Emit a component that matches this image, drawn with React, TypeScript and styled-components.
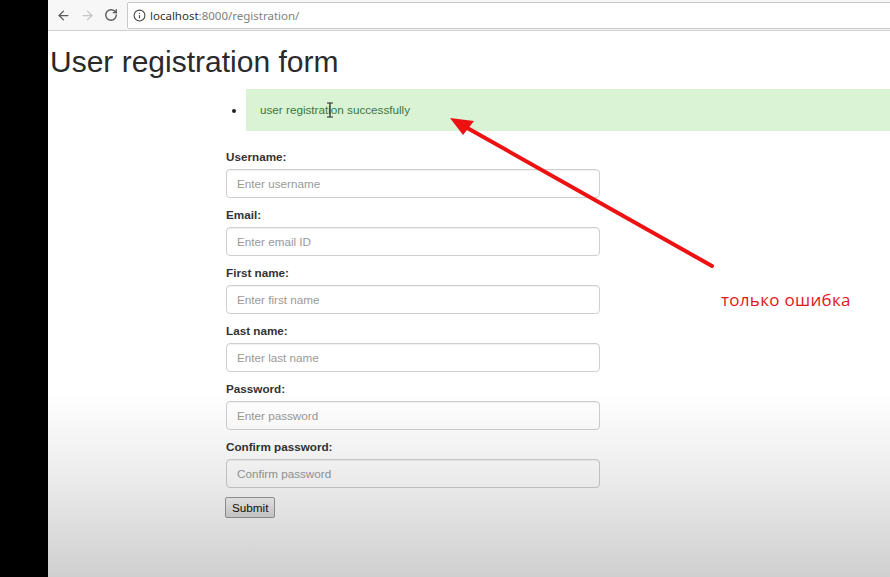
import * as React from "react";
import styled, { createGlobalStyle } from "styled-components";
import { ArrowLeft, ArrowRight, RotateCw, Info } from "lucide-react";

const GlobalStyle = createGlobalStyle`
  html, body {
    margin: 0;
    padding: 0;
    background: #000;
  }
  * {
    box-sizing: border-box;
  }
`;

const SFrame = styled.div`
  display: flex;
  width: 890px;
  height: 577px;
  overflow: hidden;
  background: #000;
`;

const SSide = styled.div`
  width: 48px;
  flex-shrink: 0;
  background: #000;
`;

const SWindow = styled.div`
  position: relative;
  flex: 1;
  display: flex;
  flex-direction: column;
  background: #fff;
  overflow: hidden;
`;

const SToolbar = styled.div`
  height: 31px;
  display: flex;
  align-items: center;
  padding-left: 3px;
  background: #f7f7f7;
  border-bottom: 1px solid #cfcfcf;
  flex-shrink: 0;
`;

const SNav = styled.span<{ $dim?: boolean }>`
  display: flex;
  width: 24px;
  justify-content: center;
  color: ${({ $dim }) => ($dim ? "#c4c4c4" : "#5a5a5a")};
`;

const SUrlBox = styled.div`
  flex: 1;
  height: 27px;
  margin-left: 4px;
  margin-right: -4px;
  display: flex;
  align-items: center;
  gap: 4px;
  padding-left: 5px;
  background: #fff;
  border: 1px solid #c9c9c9;
  border-radius: 2px;
  font-family: "Noto Sans", "DejaVu Sans", sans-serif;
  font-size: 11.5px;
  color: #808080;
`;

const SHost = styled.span`
  color: #303030;
`;

const SPage = styled.div`
  flex: 1;
  padding-left: 2px;
  font-family: "Liberation Sans", Arial, sans-serif;
  color: #333;
`;

const STitle = styled.h1`
  margin: 14px 0 10px;
  font-size: 30px;
  line-height: 34px;
  font-weight: 400;
  color: #2a2a2a;
`;

const SContent = styled.div`
  margin-left: 176px;
`;

const SMessages = styled.ul`
  margin: 0 0 17px;
  padding-left: 20px;
  font-size: 11.7px;
`;

const SMessage = styled.li`
  height: 42px;
  line-height: 42px;
  padding-left: 14px;
  background: #daf3d5;
  color: #3c763d;
  margin-right: -10px;
  &::marker {
    color: #222;
    font-size: 12px;
  }
`;

const SField = styled.div`
  display: flex;
  flex-direction: column;
  margin-bottom: 8px;
`;

const SLabel = styled.label`
  font-size: 11.7px;
  line-height: 18px;
  font-weight: 700;
  margin-bottom: 3px;
  color: #333;
`;

const SInput = styled.input`
  width: 374px;
  height: 29px;
  padding: 0 10px;
  font-family: "Liberation Sans", Arial, sans-serif;
  font-size: 11.7px;
  color: #555;
  background: #fff;
  border: 1px solid #cfcfcf;
  border-radius: 4px;
  box-shadow: inset 0 1px 1px rgba(0, 0, 0, 0.06);
  &::placeholder {
    color: #9a9a9a;
  }
`;

const SSubmit = styled.button`
  margin-top: 1px;
  margin-left: -1px;
  height: 21px;
  padding: 0 6px;
  font-family: "Liberation Sans", Arial, sans-serif;
  font-size: 11.7px;
  color: #111;
  background: linear-gradient(#f6f6f6, #dcdcdc);
  border: 1px solid #9a9a9a;
  border-radius: 2px;
`;

const SShade = styled.div`
  position: absolute;
  inset: 0;
  pointer-events: none;
  background: linear-gradient(
    to bottom,
    rgba(0, 0, 0, 0) 0%,
    rgba(0, 0, 0, 0) 68%,
    rgba(0, 0, 0, 0.07) 82%,
    rgba(0, 0, 0, 0.19) 100%
  );
`;

const SMarks = styled.svg`
  position: absolute;
  left: -48px;
  top: 0;
  pointer-events: none;
`;

const SNote = styled.div`
  position: absolute;
  left: 673px;
  top: 288px;
  font-family: "Open Sans", "Noto Sans", sans-serif;
  font-size: 17px;
  letter-spacing: 0.3px;
  color: #e01818;
`;

const fields = [
  { label: "Username:", placeholder: "Enter username", type: "text" },
  { label: "Email:", placeholder: "Enter email ID", type: "email" },
  { label: "First name:", placeholder: "Enter first name", type: "text" },
  { label: "Last name:", placeholder: "Enter last name", type: "text" },
  { label: "Password:", placeholder: "Enter password", type: "password" },
  { label: "Confirm password:", placeholder: "Confirm password", type: "password" },
];

export default function App() {
  return (
    <>
      <GlobalStyle />
      <SFrame>
        <SSide />
        <SWindow>
          <SToolbar>
            <SNav>
              <ArrowLeft size={15} strokeWidth={2} />
            </SNav>
            <SNav $dim>
              <ArrowRight size={15} strokeWidth={2} />
            </SNav>
            <SNav>
              <RotateCw size={14} strokeWidth={2.4} />
            </SNav>
            <SUrlBox>
              <Info size={13} strokeWidth={2} color="#444" />
              <span>
                <SHost>localhost</SHost>:8000/registration/
              </span>
            </SUrlBox>
          </SToolbar>
          <SPage>
            <STitle>User registration form</STitle>
            <SContent>
              <SMessages>
                <SMessage>user registration successfully</SMessage>
              </SMessages>
              <form>
                {fields.map((f) => (
                  <SField key={f.label}>
                    <SLabel>{f.label}</SLabel>
                    <SInput type={f.type} placeholder={f.placeholder} />
                  </SField>
                ))}
                <SSubmit type="button">Submit</SSubmit>
              </form>
            </SContent>
          </SPage>
          <SShade />
          <SMarks width="890" height="577" viewBox="0 0 890 577">
            <line x1="712" y1="266" x2="462" y2="125" stroke="#ee1111" strokeWidth="4" strokeLinecap="round" />
            <polygon points="450,118 474,121 463,135" fill="#ee1111" />
            <path d="M327 103 h6 M330 103 v14 M327 117 h6" stroke="#222" strokeWidth="1.2" fill="none" />
          </SMarks>
          <SNote>только ошибка</SNote>
        </SWindow>
      </SFrame>
    </>
  );
}
